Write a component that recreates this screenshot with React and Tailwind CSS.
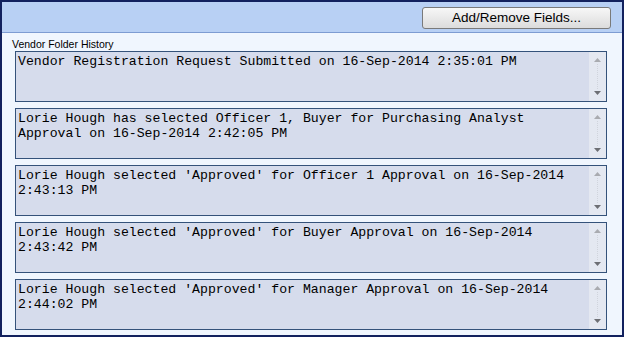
const entries = [
  ["Vendor Registration Request Submitted on 16-Sep-2014 2:35:01 PM"],
  ["Lorie Hough has selected Officer 1, Buyer for Purchasing Analyst", "Approval on 16-Sep-2014 2:42:05 PM"],
  ["Lorie Hough selected 'Approved' for Officer 1 Approval on 16-Sep-2014", "2:43:13 PM"],
  ["Lorie Hough selected 'Approved' for Buyer Approval on 16-Sep-2014", "2:43:42 PM"],
  ["Lorie Hough selected 'Approved' for Manager Approval on 16-Sep-2014", "2:44:02 PM"],
];

function HistoryBox({ lines }) {
  return (
    <div className="flex h-[51px] border border-[#34527a] bg-[#d6dcec]">
      <div className="flex-1 pl-[2px] pt-[2px] font-['Liberation_Mono',monospace] text-[13.2px] leading-[15px] text-black">
        {lines.map((l, i) => (
          <div key={i} className="whitespace-pre">{l}</div>
        ))}
      </div>
      <div className="relative flex w-[17px] flex-col items-center justify-between bg-[#e4e8f1] py-[6px]">
        <div className="absolute top-[12px] bottom-[12px] left-[8px] border-l border-dotted border-[#d0d4dc]" />
        <svg width="7" height="4" viewBox="0 0 7 4">
          <polygon points="3.5,0 7,4 0,4" fill="#a9abb0" />
        </svg>
        <svg width="7" height="4" viewBox="0 0 7 4">
          <polygon points="0,0 7,0 3.5,4" fill="#6d6f74" />
        </svg>
      </div>
    </div>
  );
}

export default function App() {
  return (
    <div className="h-[338px] w-[626px] bg-white">
      <div className="flex h-[337px] w-[624px] flex-col border-2 border-[#12215e] bg-[#f0f6fe]">
        <div className="flex h-[31px] justify-end border-b border-[#7d9cd2] bg-[#b8d0f4] pt-[5px] pr-[11px]">
          <button className="h-[22px] w-[189px] rounded-[3px] border border-[#7a7a7a] bg-gradient-to-b from-[#f7f7f7] to-[#dcdcdc] font-['Liberation_Sans',Arial,sans-serif] text-[13.5px] leading-[20px] text-black">
            Add/Remove Fields...
          </button>
        </div>
        <div className="flex flex-col pt-[4px]">
          <div className="h-[14px] pl-[10px] font-['Liberation_Sans',Arial,sans-serif] text-[10.5px] leading-[14px] text-black">
            Vendor Folder History
          </div>
          <div className="ml-[13px] mr-[15px] flex flex-col gap-[6px]">
            {entries.map((lines, i) => (
              <HistoryBox key={i} lines={lines} />
            ))}
          </div>
        </div>
      </div>
    </div>
  );
}
